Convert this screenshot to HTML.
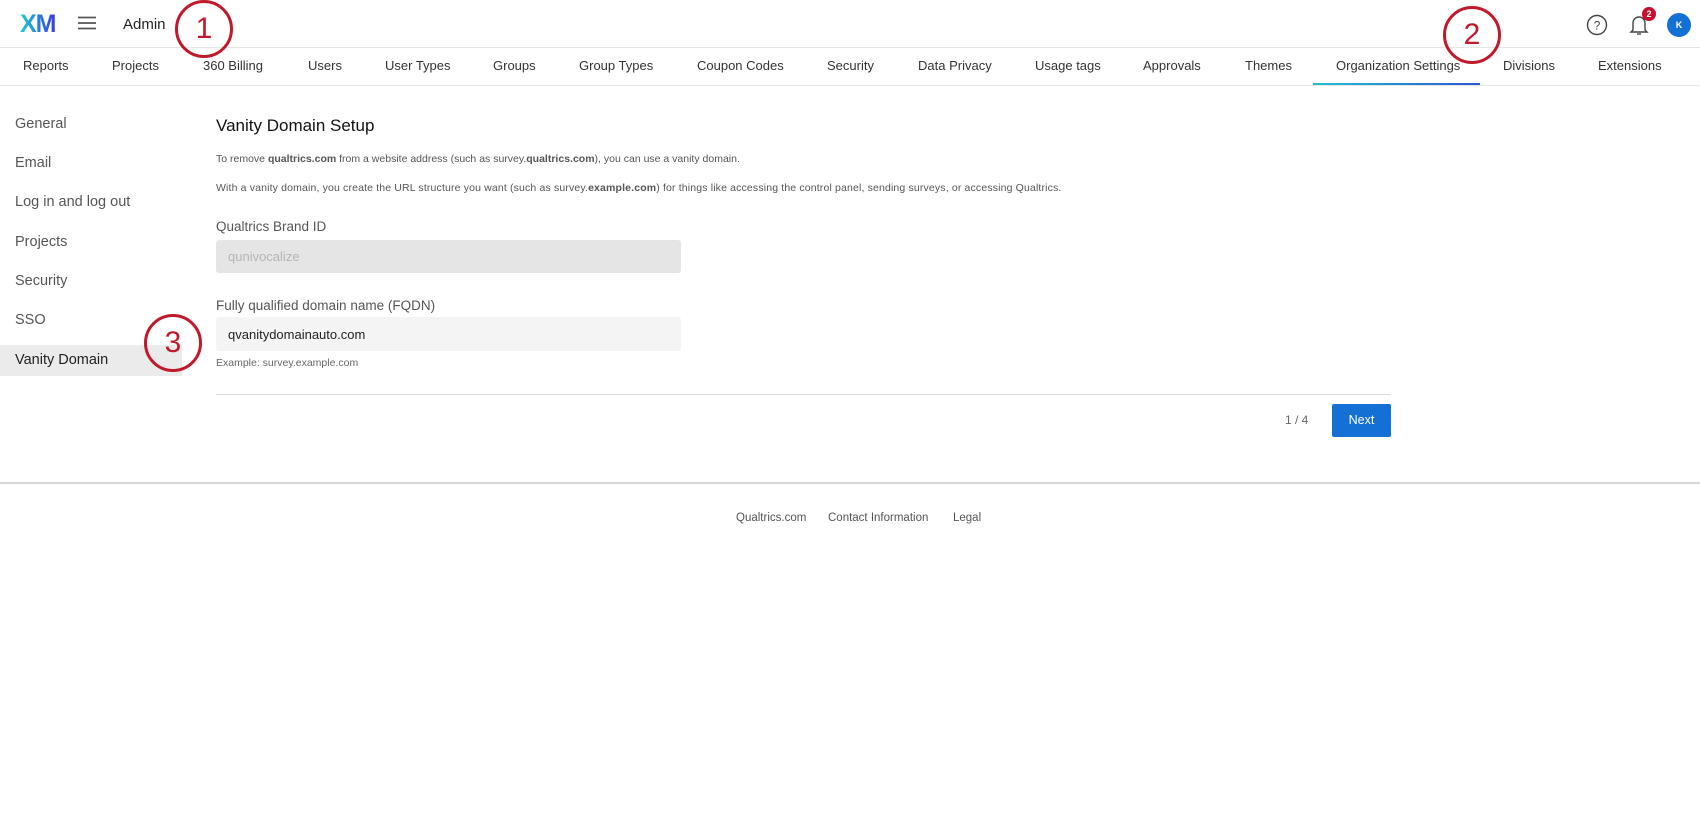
<!DOCTYPE html>
<html><head><meta charset="utf-8"><style>
*{margin:0;padding:0;box-sizing:border-box}
body{width:1700px;height:832px;background:#fff;font-family:"Liberation Sans",sans-serif;color:#333;position:relative;overflow:hidden}
.a{position:absolute;white-space:nowrap}
.nav{top:58px;font-size:13px;color:#333}
.side{left:15px;font-size:14.5px;color:#555}
.circ{position:absolute;width:58px;height:58px;border:3.5px solid #c0192a;border-radius:50%;color:#c0192a;font-size:30px;text-align:center;line-height:51px;background:transparent}
</style></head><body>
<div class="a" style="left:20px;top:10px;font-size:25px;font-weight:bold;letter-spacing:-1px;background:linear-gradient(90deg,#1fd1c8,#2a7de1,#3b3be0);-webkit-background-clip:text;color:transparent">XM</div>
<svg class="a" style="left:78px;top:16px" width="18" height="14"><path d="M0 1.5H18M0 7H18M0 12.5H18" stroke="#555" stroke-width="1.8"/></svg>
<div class="a" style="left:123px;top:16px;font-size:15px;color:#222">Admin</div>
<div class="a" style="left:0;top:47px;width:1700px;height:1px;background:#e6e6e6"></div>
<div class="a nav" style="left:23px">Reports</div>
<div class="a nav" style="left:112px">Projects</div>
<div class="a nav" style="left:203px">360 Billing</div>
<div class="a nav" style="left:308px">Users</div>
<div class="a nav" style="left:385px">User Types</div>
<div class="a nav" style="left:493px">Groups</div>
<div class="a nav" style="left:579px">Group Types</div>
<div class="a nav" style="left:697px">Coupon Codes</div>
<div class="a nav" style="left:827px">Security</div>
<div class="a nav" style="left:918px">Data Privacy</div>
<div class="a nav" style="left:1035px">Usage tags</div>
<div class="a nav" style="left:1143px">Approvals</div>
<div class="a nav" style="left:1245px">Themes</div>
<div class="a nav" style="left:1336px">Organization Settings</div>
<div class="a nav" style="left:1503px">Divisions</div>
<div class="a nav" style="left:1598px">Extensions</div>
<div class="a" style="left:1313px;top:83px;width:167px;height:2px;background:linear-gradient(90deg,#21c0d0,#2b55d8)"></div>
<div class="a" style="left:0;top:85px;width:1700px;height:1px;background:#e6e6e6"></div>
<svg class="a" style="left:1586px;top:14px" width="22" height="22"><circle cx="11" cy="11" r="9.5" fill="none" stroke="#444" stroke-width="1.4"/><text x="11" y="15.5" font-size="12" text-anchor="middle" fill="#444" font-family="Liberation Sans">?</text></svg>
<svg class="a" style="left:1628px;top:13px" width="22" height="24"><path d="M5 17V10a6 6 0 0 1 12 0v7l2 2H3z" fill="none" stroke="#444" stroke-width="1.4"/><path d="M9 21h4" stroke="#444" stroke-width="1.4"/></svg>
<div class="a" style="left:1642px;top:7px;width:14px;height:14px;border-radius:50%;background:#c8102e;color:#fff;font-size:9px;font-weight:bold;text-align:center;line-height:14px">2</div>
<div class="a" style="left:1667px;top:13px;width:24px;height:24px;border-radius:50%;background:#1570d6;color:#fff;font-size:9px;font-weight:bold;text-align:center;line-height:24px">K</div>

<div class="a side" style="top:116px">General</div>
<div class="a side" style="top:155px">Email</div>
<div class="a side" style="top:194px">Log in and log out</div>
<div class="a side" style="top:234px">Projects</div>
<div class="a side" style="top:273px">Security</div>
<div class="a side" style="top:312px">SSO</div>
<div class="a" style="left:0;top:345px;width:182px;height:31px;background:#ebebeb"></div>
<div class="a side" style="top:352px;color:#222">Vanity Domain</div>

<div class="a" style="left:216px;top:116px;font-size:17px;color:#111">Vanity Domain Setup</div>
<div class="a" style="left:216px;top:153px;font-size:10.5px;color:#555">To remove <b>qualtrics.com</b> from a website address (such as survey.<b>qualtrics.com</b>), you can use a vanity domain.</div>
<div class="a" style="left:216px;top:182px;font-size:10.5px;color:#555;letter-spacing:0.15px">With a vanity domain, you create the URL structure you want (such as survey.<b>example.com</b>) for things like accessing the control panel, sending surveys, or accessing Qualtrics.</div>
<div class="a" style="left:216px;top:219px;font-size:13.5px;color:#555">Qualtrics Brand ID</div>
<div class="a" style="left:216px;top:240px;width:465px;height:33px;background:#e5e5e5;border-radius:3px"></div>
<div class="a" style="left:228px;top:249px;font-size:13px;color:#b5b5b5">qunivocalize</div>
<div class="a" style="left:216px;top:298px;font-size:13.5px;color:#555">Fully qualified domain name (FQDN)</div>
<div class="a" style="left:216px;top:317px;width:465px;height:34px;background:#f4f4f4;border-radius:3px"></div>
<div class="a" style="left:228px;top:327px;font-size:13px;color:#222">qvanitydomainauto.com</div>
<div class="a" style="left:216px;top:357px;font-size:10.5px;color:#666">Example: survey.example.com</div>
<div class="a" style="left:216px;top:394px;width:1175px;height:1px;background:#ddd"></div>
<div class="a" style="left:1285px;top:413px;font-size:12px;color:#666">1 / 4</div>
<div class="a" style="left:1332px;top:404px;width:59px;height:33px;background:#1570d6;border-radius:2px;color:#fff;font-size:12.5px;text-align:center;line-height:33px">Next</div>
<div class="a" style="left:0;top:482px;width:1700px;height:2px;background:#d6d6d6"></div>
<div class="a" style="left:736px;top:512px;font-size:11.5px;color:#555">Qualtrics.com</div>
<div class="a" style="left:828px;top:512px;font-size:11.5px;color:#555">Contact Information</div>
<div class="a" style="left:953px;top:512px;font-size:11.5px;color:#555">Legal</div>

<div class="circ" style="left:175px;top:0px">1</div>
<div class="circ" style="left:1443px;top:6px">2</div>
<div class="circ" style="left:144px;top:314px">3</div>
</body></html>
